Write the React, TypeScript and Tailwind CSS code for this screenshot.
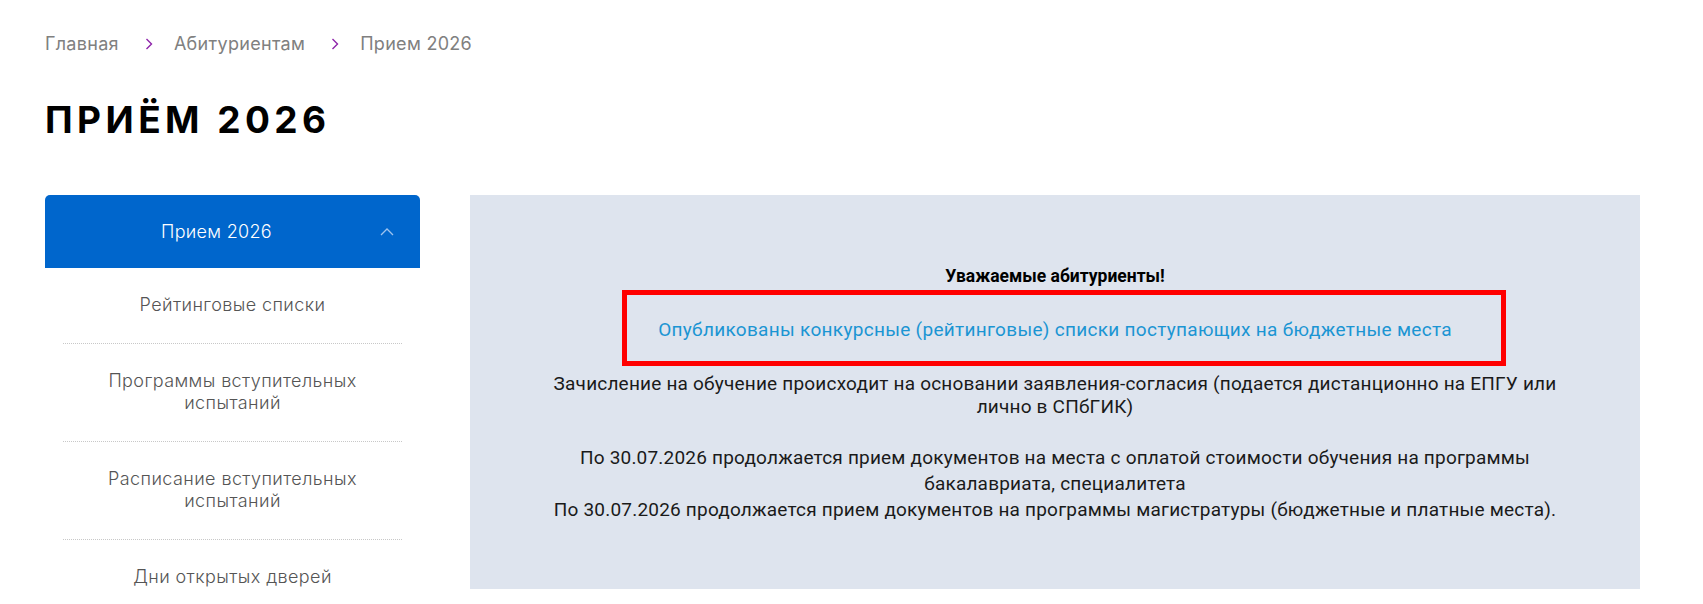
import React from "react";

const Chevron = () => (
  <svg width="8" height="12" viewBox="0 0 8 12" className="ml-[26px] mr-[21px] shrink-0">
    <polyline points="1.5,1 6.5,6 1.5,11" fill="none" stroke="#8e24aa" strokeWidth="1.4" />
  </svg>
);

const items: string[][] = [
  ["Рейтинговые списки"],
  ["Программы вступительных", "испытаний"],
  ["Расписание вступительных", "испытаний"],
  ["Дни открытых дверей"],
];

export default function App() {
  return (
    <div
      className="w-[1703px] h-[604px] overflow-hidden bg-white pl-[45px]"
      style={{ fontFamily: "Inter, 'Noto Sans', sans-serif" }}
    >
      <nav className="flex items-center h-[24px] mt-[32px] text-[18px] leading-[24px] tracking-[0.3px] text-[#808080]">
        <span>Главная</span>
        <Chevron />
        <span>Абитуриентам</span>
        <Chevron />
        <span>Прием 2026</span>
      </nav>

      <h1 className="mt-[41px] text-[37px] leading-[45px] font-bold tracking-[0.12em] text-black">
        ПРИЁМ 2026
      </h1>

      <div className="mt-[53px] flex gap-[50px] items-start">
        <aside className="w-[375px] shrink-0">
          <div className="h-[73px] rounded-t-[5px] bg-[#0066cc] flex items-center pl-[20px] pr-[26px] gap-[12px]">
            <span className="flex-1 text-center text-white text-[18px] tracking-[0.3px] font-light">Прием 2026</span>
            <svg width="14" height="8" viewBox="0 0 14 8" className="shrink-0">
              <polyline points="1,7 7,1 13,7" fill="none" stroke="#9ec3ee" strokeWidth="1.3" />
            </svg>
          </div>
          <ul>
            {items.map((lines, i) => (
              <li
                key={i}
                className="mx-[18px] pt-[26px] pb-[27px] border-b border-dotted border-[#c8c8c8] text-center text-[18px] leading-[22px] tracking-[0.4px] font-light text-[#555555]"
              >
                {lines.map((l, j) => (
                  <div key={j}>{l}</div>
                ))}
              </li>
            ))}
          </ul>
        </aside>

        <section
          className="w-[1170px] h-[394px] shrink-0 bg-[#dee4ee] pt-[70px] text-center text-[19px] tracking-[0.2px] text-[#1a1a1a]"
          style={{ fontFamily: "Roboto, 'Liberation Sans', sans-serif" }}
        >
          <p className="font-bold text-black text-[17.5px] tracking-normal leading-[23px]">Уважаемые абитуриенты!</p>
          <p className="mt-[30px] leading-[23px]">
            <span className="relative inline-block text-[#1b95d3] tracking-[0.3px]">
              Опубликованы конкурсные (рейтинговые) списки поступающих на бюджетные места
              <span className="absolute left-[-36px] right-[-54px] top-[-28px] bottom-[-25px] border-[5px] border-[#ff0000]" />
            </span>
          </p>
          <p className="mt-[31px] leading-[23px]">
            Зачисление на обучение происходит на основании заявления-согласия (подается дистанционно на ЕПГУ или
            <br />
            лично в СПбГИК)
          </p>
          <p className="mt-[27px] leading-[26px]">
            По 30.07.2026 продолжается прием документов на места с оплатой стоимости обучения на программы
            <br />
            бакалавриата, специалитета
            <br />
            По 30.07.2026 продолжается прием документов на программы магистратуры (бюджетные и платные места).
          </p>
        </section>
      </div>
    </div>
  );
}
